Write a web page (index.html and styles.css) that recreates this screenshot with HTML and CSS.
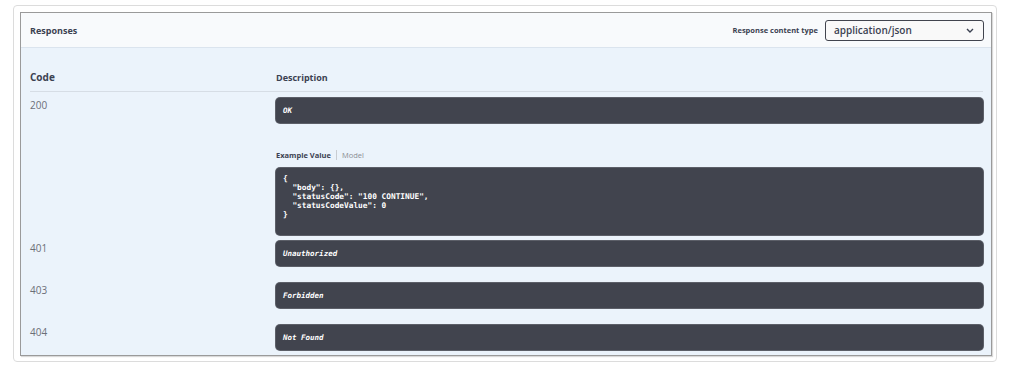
FILE: index.html
```html
<!DOCTYPE html>
<html>
<head>
  <link rel="stylesheet" href="styles.css">
</head>
<body>
  <div class="card">
    <div class="panel">
      <div class="panel-header">
        <h4>Responses</h4>
        <div class="content-type">
          <label>Response content type</label>
          <div class="select">
            <span>application/json</span>
            <svg width="8" height="5" viewBox="0 0 8 5"><path d="M1 1 L4 4 L7 1" fill="none" stroke="#3b4151" stroke-width="1.4"/></svg>
          </div>
        </div>
      </div>

      <div class="panel-body">
        <table class="responses">
          <thead>
            <tr>
              <th class="col-code">Code</th>
              <th>Description</th>
            </tr>
          </thead>
          <tbody>
            <tr class="first">
              <td class="col-code">200</td>
              <td>
                <div class="markdown"><em>OK</em></div>
                <div class="example-tabs">
                  <span class="active">Example Value</span>
                  <span class="sep"></span>
                  <span>Model</span>
                </div>
                <pre class="example">{
  "body": {},
  "statusCode": "100 CONTINUE",
  "statusCodeValue": 0
}</pre>
              </td>
            </tr>
            <tr>
              <td class="col-code">401</td>
              <td><div class="markdown"><em>Unauthorized</em></div></td>
            </tr>
            <tr>
              <td class="col-code">403</td>
              <td><div class="markdown"><em>Forbidden</em></div></td>
            </tr>
            <tr class="last">
              <td class="col-code">404</td>
              <td><div class="markdown"><em>Not Found</em></div></td>
            </tr>
          </tbody>
        </table>
      </div>
    </div>
  </div>
</body>
</html>
```

FILE: styles.css
```css
body {
  margin: 0;
  padding: 5px 13px 0 13px;
  background-color: #ffffff;
  font-family: "Open Sans", "Noto Sans", sans-serif;
  color: #3b4151;
}

.card {
  width: 984px;
  box-sizing: border-box;
  border: 1px solid #dcdcdc;
  border-radius: 4px;
  padding: 6px 4px 5px 6px;
}

.panel {
  border: 1px solid #9a9a9a;
  box-shadow: 1px 1px 1px rgba(0, 0, 0, 0.15);
  background-color: #ebf3fb;
}

/* En-tête */
.panel-header {
  height: 34px;
  display: flex;
  align-items: center;
  justify-content: space-between;
  padding: 0 7px 0 9px;
  background-color: #f8fafc;
  border-bottom: 1px solid #dbe4ee;
}

.panel-header h4 {
  margin: 0;
  font-size: 9px;
  font-weight: 700;
  color: #3b4151;
}

.content-type {
  display: flex;
  align-items: center;
  gap: 7px;
}

.content-type label {
  font-size: 7.5px;
  font-weight: 700;
  color: #3b4151;
}

.select {
  width: 159px;
  height: 21px;
  box-sizing: border-box;
  display: flex;
  align-items: center;
  justify-content: space-between;
  padding: 0 9px 0 8px;
  border: 1px solid #41444e;
  border-radius: 3px;
  background-color: #f9f9f9;
  font-size: 10px;
  font-weight: 600;
  color: #3b4151;
}

/* Tableau */
.panel-body {
  padding: 0 8px 0 9px;
}

.responses {
  width: 100%;
  border-collapse: collapse;
}

.responses th {
  text-align: left;
  font-size: 9px;
  font-weight: 700;
  padding: 22px 0 7px 0;
  border-bottom: 1px solid #d6dde5;
  color: #3b4151;
}

.responses th.col-code {
  font-size: 10px;
}

.col-code {
  width: 246px;
}

.responses td {
  vertical-align: top;
  padding: 6px 0 11px 0;
}

.responses td.col-code {
  font-size: 10px;
  color: #6b6f78;
  padding-top: 6px;
}

.responses tr.first td {
  padding-bottom: 0;
}

.responses tr.last td {
  padding-bottom: 5px;
}

.markdown {
  height: 25px;
  display: flex;
  align-items: center;
  padding: 0 7px;
  background-color: #41444e;
  border-radius: 4px;
  box-shadow: 0 0 0 1px #5c5f68;
}

.markdown em {
  font-family: "DejaVu Sans Mono", monospace;
  font-size: 7.5px;
  font-weight: 700;
  font-style: italic;
  color: #ffffff;
}

.example-tabs {
  display: flex;
  align-items: center;
  gap: 5px;
  margin-top: 27px;
  font-size: 7.5px;
  color: #8a8d94;
}

.example-tabs .active {
  font-weight: 700;
  color: #3b4151;
}

.example-tabs .sep {
  width: 1px;
  height: 10px;
  background-color: #c8ccd2;
}

.example {
  margin: 8px 0 0 0;
  height: 67px;
  box-sizing: border-box;
  padding: 6px 7px;
  background-color: #41444e;
  border-radius: 4px;
  box-shadow: 0 0 0 1px #5c5f68;
  font-family: "DejaVu Sans Mono", monospace;
  font-size: 7.8px;
  font-weight: 700;
  line-height: 9px;
  color: #ffffff;
}
```
